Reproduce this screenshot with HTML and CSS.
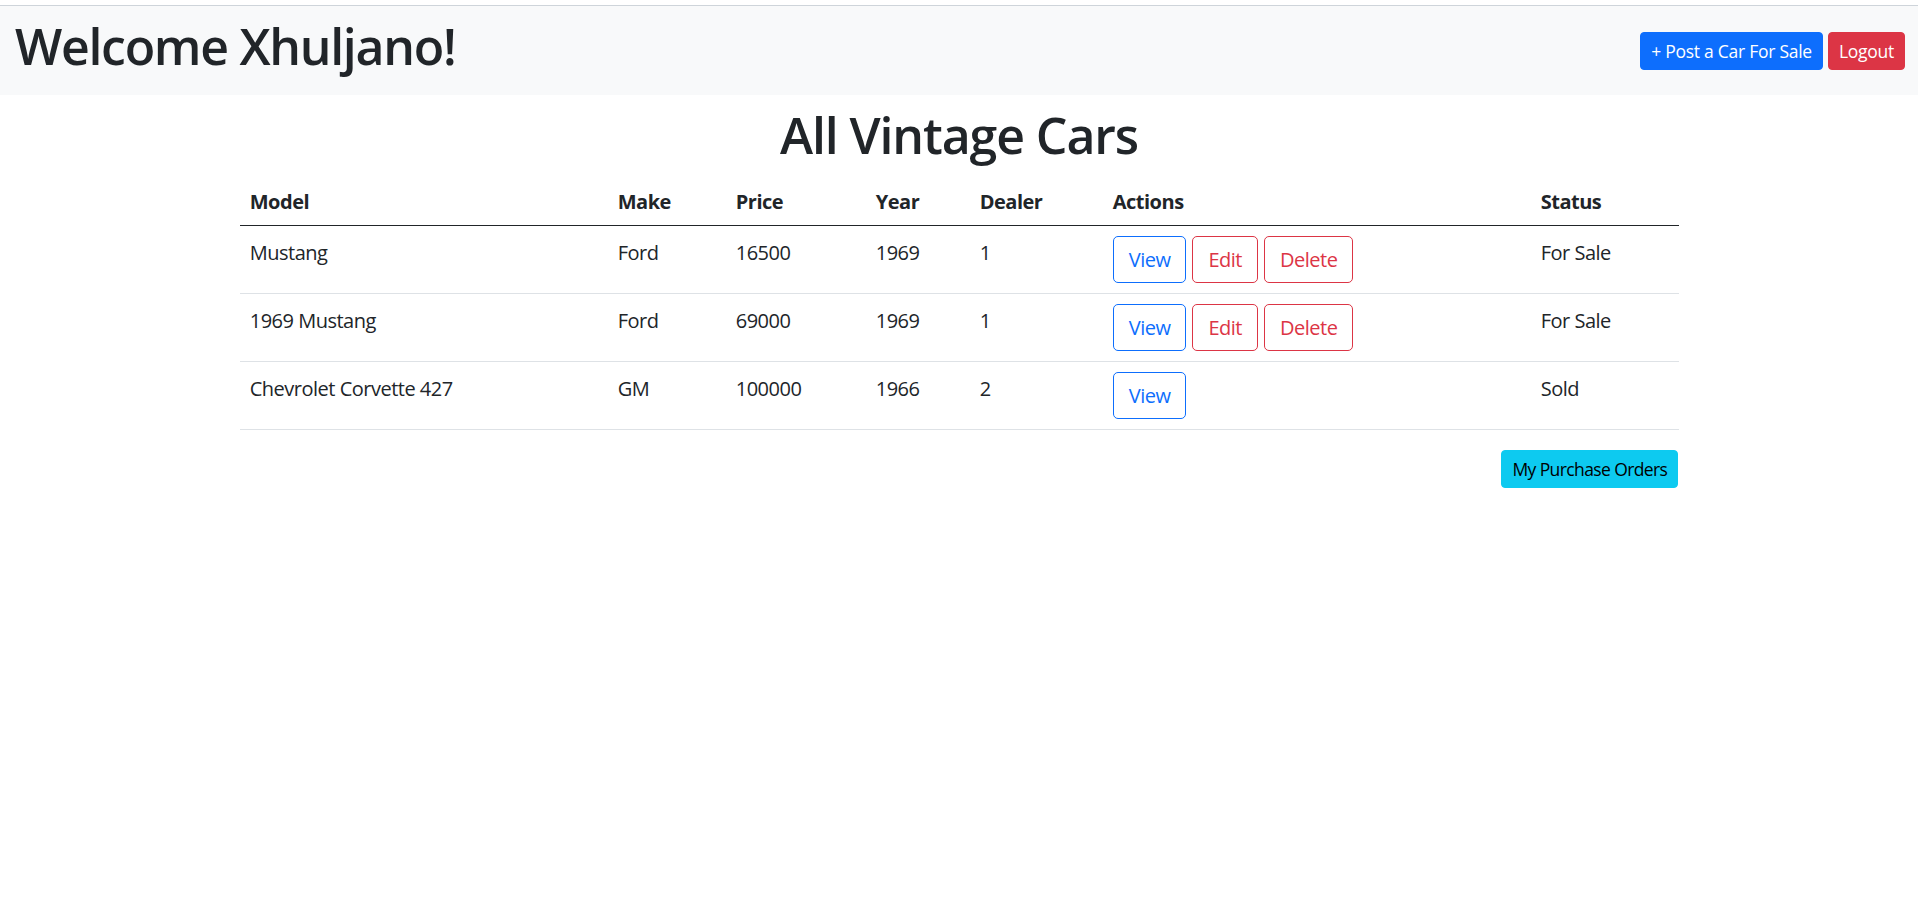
FILE: index.html
```html
<!DOCTYPE html>
<html lang="en">
<head>
<meta charset="utf-8">
<title>All Vintage Cars</title>
<link rel="stylesheet" href="styles.css">
</head>
<body>
<nav class="navbar">
  <h1 class="welcome">Welcome Xhuljano!</h1>
  <div class="nav-actions">
    <button class="btn btn-sm btn-primary">+ Post a Car For Sale</button>
    <button class="btn btn-sm btn-danger">Logout</button>
  </div>
</nav>
<main class="content">
  <h1 class="page-title">All Vintage Cars</h1>
  <table class="cars">
    <colgroup>
      <col class="c-model"><col class="c-make"><col class="c-price"><col class="c-year"><col class="c-dealer"><col class="c-actions"><col class="c-status">
    </colgroup>
    <thead>
      <tr><th>Model</th><th>Make</th><th>Price</th><th>Year</th><th>Dealer</th><th>Actions</th><th>Status</th></tr>
    </thead>
    <tbody>
      <tr>
        <td>Mustang</td><td>Ford</td><td>16500</td><td>1969</td><td>1</td>
        <td class="cell-actions"><div class="actions"><button class="btn btn-outline-primary">View</button><button class="btn btn-outline-danger">Edit</button><button class="btn btn-outline-danger">Delete</button></div></td>
        <td>For Sale</td>
      </tr>
      <tr>
        <td>1969 Mustang</td><td>Ford</td><td>69000</td><td>1969</td><td>1</td>
        <td class="cell-actions"><div class="actions"><button class="btn btn-outline-primary">View</button><button class="btn btn-outline-danger">Edit</button><button class="btn btn-outline-danger">Delete</button></div></td>
        <td>For Sale</td>
      </tr>
      <tr>
        <td>Chevrolet Corvette 427</td><td>GM</td><td>100000</td><td>1966</td><td>2</td>
        <td class="cell-actions"><div class="actions"><button class="btn btn-outline-primary">View</button></div></td>
        <td>Sold</td>
      </tr>
    </tbody>
  </table>
  <div class="footer-actions">
    <button class="btn btn-sm btn-info">My Purchase Orders</button>
  </div>
</main>
</body>
</html>
```

FILE: styles.css
```css
* { box-sizing: border-box; }

html, body {
  margin: 0;
  background: #fff;
}

body {
  padding-top: 5px;
  font-family: "Open Sans", "Noto Sans", "Liberation Sans", sans-serif;
  font-size: 20px;
  line-height: 1.5;
  color: #212529;
  letter-spacing: -0.025em;
}

.navbar {
  display: flex;
  align-items: center;
  justify-content: space-between;
  background: #f8f9fa;
  border-top: 1px solid #ced4da;
  padding: 10px 13px 9px 15px;
}

.welcome {
  margin: 0 0 10px;
  font-size: 50px;
  font-weight: 600;
  line-height: 1.2;
  letter-spacing: -0.026em;
}

.nav-actions {
  display: flex;
  gap: 5px;
}

.btn {
  font-family: inherit;
  letter-spacing: inherit;
  font-size: 20px;
  line-height: 30px;
  padding: 7.5px 15px;
  border: 1px solid transparent;
  border-radius: 5px;
  background: transparent;
  cursor: pointer;
  white-space: nowrap;
}

.btn-sm {
  font-size: 17.5px;
  line-height: 26px;
  padding: 5px 10px;
  border-radius: 4px;
  letter-spacing: -0.015em;
}

.btn-primary { background: #0d6efd; border-color: #0d6efd; color: #fff; }
.btn-danger { background: #dc3545; border-color: #dc3545; color: #fff; }
.btn-info { background: #0dcaf0; border-color: #0dcaf0; color: #000; letter-spacing: -0.035em; }
.btn-outline-primary { border-color: #0d6efd; color: #0d6efd; }
.btn-outline-danger { border-color: #dc3545; color: #dc3545; }

.content {
  width: 75%;
  margin: 0 auto;
  padding-top: 10px;
}

.page-title {
  margin: 0 0 10px;
  font-size: 50px;
  font-weight: 600;
  line-height: 1.2;
  text-align: center;
  letter-spacing: -0.022em;
}

.cars {
  width: 100%;
  table-layout: fixed;
  border-collapse: collapse;
  margin-bottom: 20px;
}

.c-model { width: 368px; }
.c-make { width: 118px; }
.c-price { width: 140px; }
.c-year { width: 104px; }
.c-dealer { width: 133px; }
.c-actions { width: 428px; }
.c-status { width: 148px; }

.cars th,
.cars td {
  padding: 12px 10px 8px;
  text-align: left;
  vertical-align: top;
}

.cars td.cell-actions {
  padding: 10px;
}

.cars th {
  font-weight: 700;
  border-bottom: 1px solid #212529;
}

.cars td {
  border-bottom: 1px solid #dee2e6;
}

.actions {
  display: flex;
  gap: 6px;
}

.footer-actions {
  display: flex;
  justify-content: flex-end;
}
```
